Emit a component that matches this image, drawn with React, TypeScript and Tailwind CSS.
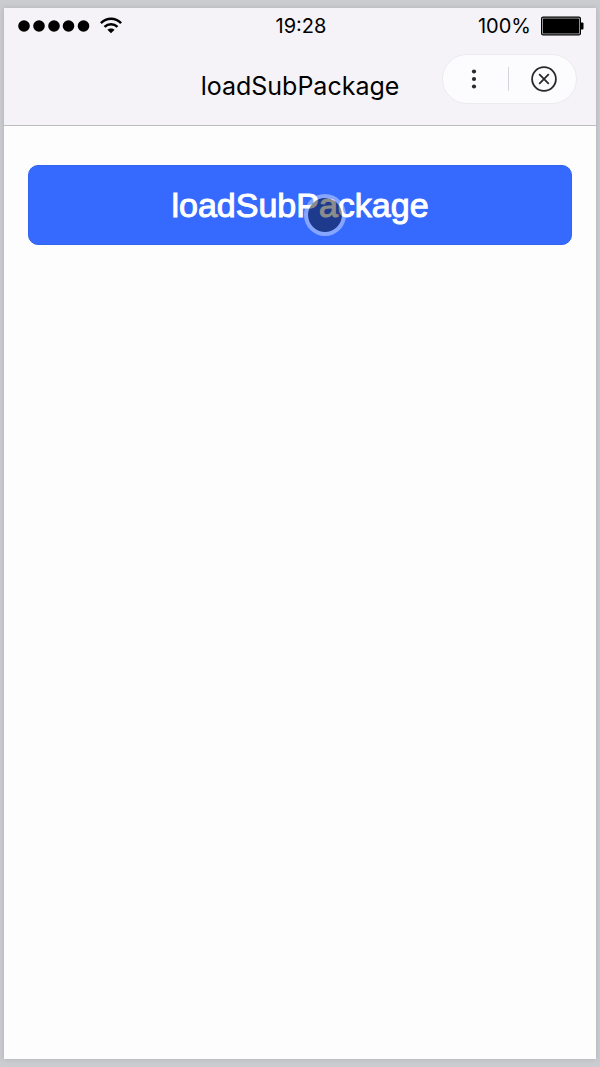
function StatusBar() {
  return (
    <div className="grid h-9 grid-cols-3 items-center pr-3 pl-3.5 font-[Inter,'Liberation_Sans',sans-serif] text-xl leading-5 text-black">
      <div className="flex items-center gap-2.5">
        <svg width="72" height="12" viewBox="0 0 72 12" role="img" aria-label="Signal strength">
          {[6, 21, 36, 50.5, 65.5].map((x) => (
            <circle key={x} cx={x} cy="6" r="5.8" />
          ))}
        </svg>
        <svg width="22" height="18" viewBox="0 0 22 18" fill="none" stroke="black" role="img" aria-label="Wi-Fi">
          <path d="M0.9 6.1C6.6 0.3 15.4 0.3 21.1 6.1" strokeWidth="2.5" />
          <path d="M4.5 9.9C8.2 6.2 13.8 6.2 17.5 9.9" strokeWidth="2.5" />
          <path d="M7.4 12.8C9.5 10.9 12.5 10.9 14.6 12.8L11 16.2Z" fill="black" stroke="none" />
        </svg>
      </div>
      <time className="text-center">19:28</time>
      <div className="flex items-center justify-end gap-2.5">
        <span>100%</span>
        <svg width="43" height="20" viewBox="0 0 43 20" role="img" aria-label="Battery full">
          <rect x="0.6" y="1.1" width="38.8" height="17.8" rx="1.5" fill="#b8b8ba" stroke="black" strokeWidth="1.2" />
          <rect x="2" y="2.5" width="36" height="15" rx="0.5" />
          <path d="M40 6.5H41.5Q42.5 6.5 42.5 7.5V12.5Q42.5 13.5 41.5 13.5H40Z" />
        </svg>
      </div>
    </div>
  );
}

function Capsule() {
  return (
    <div className="absolute top-2.5 right-[19px] flex h-[50px] w-[135px] items-center rounded-full border border-[#ebeaed] bg-[#fcfbfd]">
      <button type="button" aria-label="More" className="flex h-full w-[65px] items-center justify-center pr-[3px]">
        <svg width="6" height="20" viewBox="0 0 6 20" fill="#29292b">
          <circle cx="3" cy="2.5" r="2.1" />
          <circle cx="3" cy="10" r="2.1" />
          <circle cx="3" cy="17.5" r="2.1" />
        </svg>
      </button>
      <div className="h-6 w-px bg-[#d6d5d9]" />
      <button type="button" aria-label="Close" className="flex h-full flex-1 items-center justify-center pl-0.5">
        <svg width="26" height="26" viewBox="0 0 26 26" fill="none" stroke="#29292b" strokeWidth="1.8">
          <circle cx="13" cy="13" r="11.9" />
          <path d="M8.2 8.2L17.8 17.8M17.8 8.2L8.2 17.8" />
        </svg>
      </button>
    </div>
  );
}

export default function App() {
  return (
    <div className="flex min-h-screen flex-col bg-[#cbccd0] px-1 pt-2 pb-2 font-['Liberation_Sans',Arial,sans-serif]">
      <div className="flex flex-1 flex-col bg-[#fefdfe] shadow-[0_0_5px_#aeb0b5]">
        <header className="border-b border-[#bebdc1] bg-[#f5f3f7]">
          <StatusBar />
          <div className="relative flex h-[81px] items-center justify-center pt-0.5">
            <h1 className="font-[Inter,'Liberation_Sans',sans-serif] text-[25px] leading-8 text-black">loadSubPackage</h1>
            <Capsule />
          </div>
        </header>
        <main className="flex-1 px-6 pt-[39px]">
          <button
            type="button"
            className="relative flex h-20 w-full items-center justify-center rounded-[10px] border border-[#3264f0] bg-[#366aff] text-[34px] leading-10 text-white [-webkit-text-stroke:1px_white]"
          >
            loadSubPackage
            <span className="absolute top-7 left-1/2 ml-1 size-[42px] rounded-full border-4 border-white/40 bg-black/45 bg-clip-padding" />
          </button>
        </main>
      </div>
    </div>
  );
}
